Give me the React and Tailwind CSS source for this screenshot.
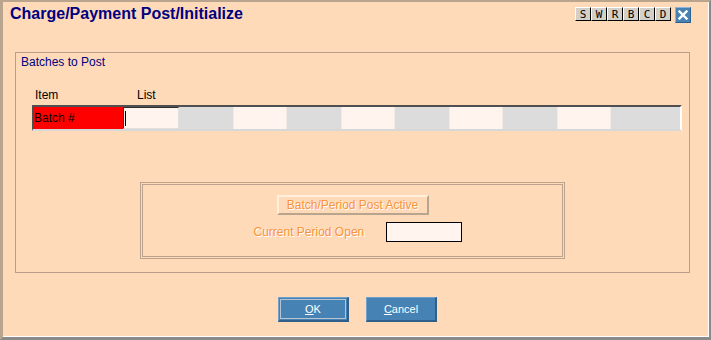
import React from 'react';

const FONT = { fontFamily: '"Liberation Sans", Arial, sans-serif' };

const toolKeys = ['S', 'W', 'R', 'B', 'C', 'D'];

const cells = ['g', 'l', 'g', 'l', 'g', 'l', 'g', 'l'];

export default function App() {
  return (
    <div className="w-[711px] h-[340px] bg-[#ffdab9] overflow-hidden" style={FONT}>
      <div className="w-full h-full flex flex-col border-t-2 border-l-[3px] border-[#b9a48e] border-r-2 border-b-[3px] border-r-[#8a8a8a] border-b-[#8a8a8a]">
        <div className="h-full flex flex-col border-r border-b border-white">
          {/* header */}
          <div className="flex items-start justify-between h-[50px] pl-[7px] pr-[17px]">
            <h1 className="text-[16px] leading-[20px] pt-[2px] font-bold text-[#000080]">Charge/Payment Post/Initialize</h1>
            <div className="flex items-start gap-[4px] pt-[5px]">
              <div className="flex">
                {toolKeys.map((k) => (
                  <div
                    key={k}
                    className="w-[16px] h-[14px] bg-[#d4d0c8] border-t border-l border-white border-r border-b border-r-black border-b-black flex items-center justify-center text-[11px] leading-none text-black"
                    style={{ fontFamily: '"DejaVu Sans Mono", monospace' }}
                  >
                    {k}
                  </div>
                ))}
              </div>
              <div className="w-[16px] h-[16px] bg-[#4682b4] border border-t-[#8fb4d8] border-l-[#8fb4d8] border-r-[#2f5f8a] border-b-[#2f5f8a] flex items-center justify-center">
                <svg width="10" height="10" viewBox="0 0 10 10">
                  <path d="M1.5 1.5 L8.5 8.5 M8.5 1.5 L1.5 8.5" stroke="white" strokeWidth="2.4" strokeLinecap="square" />
                </svg>
              </div>
            </div>
          </div>

          {/* batches panel */}
          <div className="ml-[12px] mr-[18px] h-[221px] border border-[#b9a08a] flex flex-col">
            <div className="pl-[5px] pt-[2px] text-[12px] leading-[14px] text-[#000080]">Batches to Post</div>
            <div className="flex pl-[19px] mt-[19px] text-[12px] leading-[14px] text-black">
              <span className="w-[102px]">Item</span>
              <span>List</span>
            </div>
            <div className="ml-[16px] mr-[7px] mt-[3px] h-[26px] flex border-t-2 border-l border-[#505050] border-b-2 border-b-[#d8d8d8] border-r-2 border-r-white">
              <div className="w-[90px] bg-[#ff0000] text-[12px] leading-[22px] pl-[1px] text-black">Batch #</div>
              <div className="w-[56px] bg-[#fff5ee] border-t border-l border-[#303030] border-r border-b border-r-[#e0e0e0] border-b-[#e0e0e0] flex items-center pl-[1px]">
                <div className="w-[1px] h-[15px] bg-black" />
              </div>
              {cells.map((c, i) => (
                <div
                  key={i}
                  className={c === 'g' ? 'w-[54px] bg-[#dcdcdc]' : 'w-[54px] bg-[#fff5ee] border-l border-r border-[#f0ebe6]'}
                />
              ))}
              <div className="flex-1 bg-[#dcdcdc]" />
            </div>

            <div className="mt-[51px] mx-auto w-[425px] h-[77px] border border-[#bba38d] p-[1px]">
              <div className="w-full h-full border border-[#bba38d] flex flex-col items-center">
                <div className="mt-[10px] w-[152px] h-[20px] bg-[#ffdab9] border-t-2 border-l-2 border-[#fff0dc] border-r-2 border-b-2 border-r-[#b9a48e] border-b-[#b9a48e] flex items-center justify-center text-[12px] text-[#f7943a] [text-shadow:1px_1px_0_#ffffff]">
                  Batch/Period Post Active
                </div>
                <div className="flex items-center mt-[7px] ml-[10px]">
                  <span className="w-[132px] text-[12px] text-[#f7943a] [text-shadow:1px_1px_0_#ffffff]">Current Period Open</span>
                  <div className="w-[76px] h-[20px] bg-[#fff5ee] border border-black" />
                </div>
              </div>
            </div>
          </div>

          {/* footer */}
          <div className="flex justify-center gap-[17px] mt-[24px] pl-[4px]">
            <button className="w-[71px] h-[25px] bg-[#4682b4] border-t border-l border-[#6fa0cc] border-r-2 border-b-2 border-r-[#2f5f8a] border-b-[#2f5f8a] p-[1px]">
              <div className="w-full h-full border border-[#b8c4d0] flex items-center justify-center text-[11px] text-white">
                <span><span className="underline">O</span>K</span>
              </div>
            </button>
            <button className="w-[71px] h-[25px] bg-[#4682b4] border-t border-l border-[#6fa0cc] border-r-2 border-b-2 border-r-[#2f5f8a] border-b-[#2f5f8a] flex items-center justify-center text-[11px] text-white">
              <span><span className="underline">C</span>ancel</span>
            </button>
          </div>
        </div>
      </div>
    </div>
  );
}
